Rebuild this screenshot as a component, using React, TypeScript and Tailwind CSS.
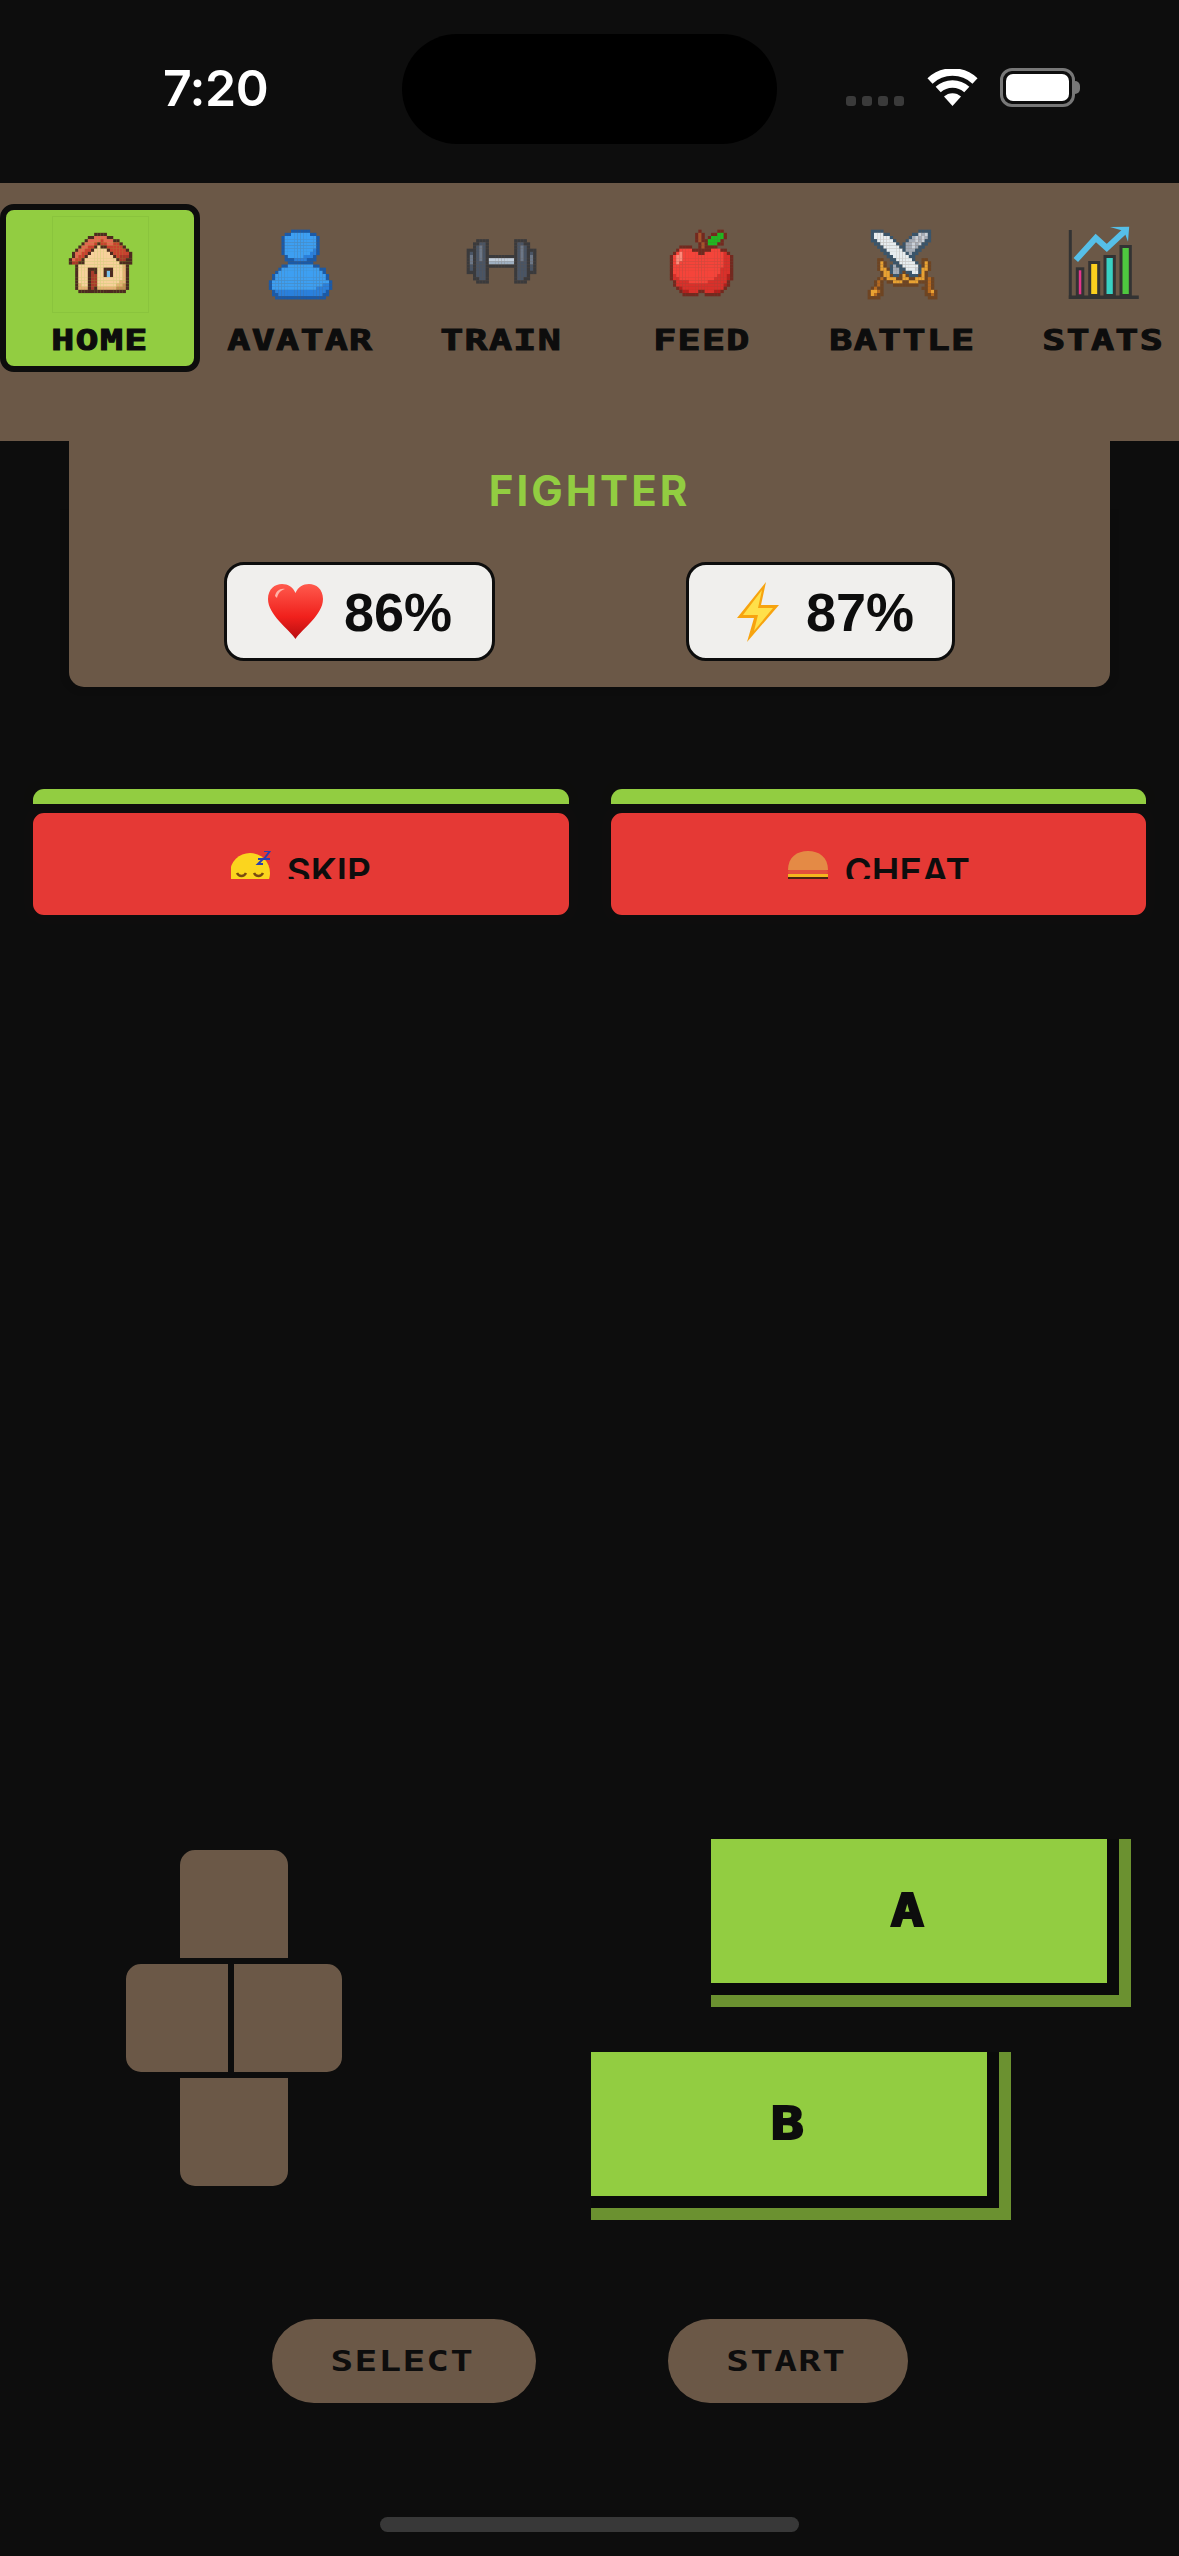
const pixelFont = "font-['DejaVu_Sans_Mono',monospace] font-bold";

type PixelMap = { rows: string[]; x: number; y: number; colors: Record<string, string> };

const house: PixelMap = {
  x: 5,
  y: 5,
  colors: { K: '#4d2a20', r: '#e2674f', R: '#c9412f', d: '#a93529', C: '#f8d09b', c: '#e5b176', t: '#c48d54', D: '#a93a2b', W: '#7cc2ea' },
  rows: [
    '........KKKK........',
    '......KKrrrrKK......',
    '.....KrrrrRrrrKK....',
    '....KrrrRKRRrrRRK...',
    '...KrrRRKCKKRRRRRK..',
    '..KrrRRKCCCCKRRRRRK.',
    '.KrrRRKCCCCCCKRRRRRK',
    '.KrRRKCCCCCCCCKRdddK',
    'KrRRKCCCCCCCCCCKddKK',
    'KddKKCCCCCCCCCCCKKKK',
    '..KCCCCCCCCCCCCCCcK.',
    '..KCCCKKKCCKKKCCCcK.',
    '..KCCCKDKCCKWKCCCcK.',
    '..KCCCKDDCCKWKCCCcK.',
    '..KCCCKDDCCCCCCCCcK.',
    '..KCCCKDDCCCCCCCccK.',
    '..KcCCKDDCCCCCCcctK.',
    '..KcccKDKcccccctttK.',
    '...KKKKKKKKKKKKKKK..',
  ],
};

const person: PixelMap = {
  x: 5,
  y: 4,
  colors: { D: '#1a5aa8', B: '#3d9ff2', m: '#2a80dc' },
  rows: [
    '.......DDDDDD.......',
    '.....DDBBBBBBDD.....',
    '....DBBBBBBBBBBD....',
    '....DBBBBBBBBBBD....',
    '....DBBBBBBBBBBD....',
    '....DBBBBBBBBBBD....',
    '....DBBBBBBBBBmD....',
    '....DBBBBBBBBmmD....',
    '.....DBBBBBmmmD.....',
    '.....DDDmmmmDDD.....',
    '......DDDDDDDD......',
    '....DDBBBBBBBBDD....',
    '...DBBBBBBBBBBBBDD..',
    '..DBBBBBBBBBBBBBBD..',
    '.DBBBBBBBBBBBBBBBBD.',
    '.DBBBBBBBBBBBBBBBBD.',
    'DBBBBBBBBBBBBBBBBBBD',
    'DBBBBBBBBBBBBBBBBmmD',
    'DBBBBBBBBBBBBBBmmmmD',
    '.DmmmmmmmmmmmmmmmmD.',
    '.DDmmmmmmmmmmmmmmDD.',
    '..DDDDDDDDDDDDDDDD..',
  ],
};

const dumbbell: PixelMap = {
  x: 4,
  y: 7,
  colors: { K: '#3a3a3c', G: '#495464', g: '#6c7787', S: '#c3d0de', s: '#9fb0c2' },
  rows: [
    '...KKKK........KKKK...',
    '..KKGGK........KGGKK..',
    '..KGgGK........KGgGK..',
    'KKKGgGK........KGgGKKK',
    'KGKGgGK........KGgGKGK',
    'KgKGgGKKKKKKKKKKGgGKgK',
    'KgKGgGKSSSSSSSSKGgGKgK',
    'KgKGGGKssssssssKGGGKgK',
    'KGKGGGKKKKKKKKKKGGGKGK',
    'KGKGGGK........KGGGKGK',
    'KKKGGGK........KGGGKKK',
    '..KGGGK........KGGGK..',
    '..KKGGK........KGGKK..',
    '...KKKK........KKKK...',
  ],
};

const apple: PixelMap = {
  x: 5,
  y: 4,
  colors: { K: '#73291f', S: '#a8522a', G: '#1fb820', R: '#f5443a', H: '#ff8a7a', d: '#d9302a', D: '#b31f1c' },
  rows: [
    '.........K.....KK...',
    '........KSK..KKGGK..',
    '........KSK.KGGGGK..',
    '........KSKKGGGGK...',
    '.........KSKGGGKK...',
    '...KKKK..KSKKKK.....',
    '..KRRRRKKKKKKRRRKK..',
    '.KRHRRRRRKKRRRRRRdK.',
    'KRHHRRRRRRRRRRRRRddK',
    'KRHHRRRRRRRRRRRRRddK',
    'KRHRRRRRRRRRRRRRRddK',
    'KRRRRRRRRRRRRRRRRddK',
    'KRRRRRRRRRRRRRRRdddK',
    'KRRRRRRRRRRRRRRRdddK',
    'KdRRRRRRRRRRRRRdddDK',
    'KddRRRRRRRRRRRddddDK',
    '.KddddRRRRRRddddddK.',
    '.KdddddddddddddddDK.',
    '..KDdddddddddddddK..',
    '...KDDdddKKdddDDK...',
    '....KKKKK..KKKKK....',
  ],
};

const swords: PixelMap = {
  x: 4,
  y: 4,
  colors: { B: '#3a556b', W: '#e6ecef', g: '#a3abb6', s: '#c9d0d8', N: '#6e4422', Y: '#e9a232', o: '#b5691f' },
  rows: [
    '.BBBB...........BBBB..',
    '.BWWWBB.......BBsgsB..',
    '.BWWWWWB.....BgsgsgB..',
    '.BBWWWWWB...BggsgsBB..',
    '..BBWWWWWB.BggsgsBB...',
    '...BBWWWWWBBggsgBB....',
    '....BBWWWWWBgggBB.....',
    '.....BBWWWWWBgBB......',
    '......BBWWWWWBB.......',
    '...NN..BBWWWWWB..NN...',
    '...NYN..BBWWWWWB.NYN..',
    '...NYN.BgBBWWWWWBNYN..',
    '...NYYNBggBBWWWsBYYN..',
    '....NYYBggBNBBWWBYN...',
    '....NYYNBBNYNBBBNYN...',
    '...NoNYYYNNYYNNYYYNoN.',
    '..NoN.NNYYYNNYYYNNNoN.',
    '..NoN...NNNNNNNN..NoN.',
    '.NoNN............NNoN.',
    'NYYoN.............NoYN',
    'NYoNN.............NNoN',
    'NNNN...............NNN',
  ],
};

function PixelIcon({ map }: { map: PixelMap }) {
  return (
    <svg viewBox="0 0 30 30" className="w-[95px] h-[95px]">
      {map.rows.flatMap((row, y) =>
        row.split('').map((ch, x) =>
          ch === '.' ? null : (
            <rect key={`${x}-${y}`} x={map.x + x} y={map.y + y} width={1.03} height={1.03} fill={map.colors[ch]} />
          ),
        ),
      )}
    </svg>
  );
}

function ChartIcon() {
  return (
    <svg viewBox="0 0 95 95" className="w-[95px] h-[95px]">
      <rect x="13.8" y="13" width="3" height="69" fill="#333" />
      <rect x="13.8" y="78.5" width="70" height="3.5" fill="#333" />
      <rect x="22.3" y="51.8" width="5.5" height="27" fill="#e5348c" stroke="#333" strokeWidth="3" />
      <rect x="34.7" y="45.5" width="9" height="33" fill="#fbcf1e" stroke="#333" strokeWidth="3" />
      <rect x="50" y="39.5" width="9.3" height="39" fill="#38d1c4" stroke="#333" strokeWidth="3" />
      <rect x="66" y="29.5" width="9.3" height="49" fill="#4ec83f" stroke="#333" strokeWidth="3" />
      <polyline points="20.8,43 40.8,21 51.8,31 71,13" fill="none" stroke="#56bfe8" strokeWidth="6" />
      <polygon points="55,10 74.2,9.7 73,24.7 69,14" fill="#56bfe8" />
    </svg>
  );
}

const tabs = [
  { label: 'HOME', icon: <PixelIcon map={house} />, active: true },
  { label: 'AVATAR', icon: <PixelIcon map={person} /> },
  { label: 'TRAIN', icon: <PixelIcon map={dumbbell} /> },
  { label: 'FEED', icon: <PixelIcon map={apple} /> },
  { label: 'BATTLE', icon: <PixelIcon map={swords} /> },
  { label: 'STATS', icon: <ChartIcon /> },
];

function Heart() {
  return (
    <svg viewBox="0 0 57 60" className="w-[57px] h-[60px] shrink-0">
      <defs>
        <linearGradient id="heartFill" x1="0" y1="0" x2="0" y2="1">
          <stop offset="0" stopColor="#ff5a4d" />
          <stop offset="0.6" stopColor="#f0201c" />
          <stop offset="1" stopColor="#b80d10" />
        </linearGradient>
      </defs>
      <path
        d="M28.5 57C22 47 1 33 1 17 1 7 8 2 15 2c6 0 11 3 13.5 9C31 5 36 2 42 2c7 0 14 5 14 15 0 16-21 30-27.500 40z"
        fill="url(#heartFill)"
      />
      <path d="M8 14c1-5 5-8 10-7-4 1-7 4-8 9z" fill="#ffb3a8" />
    </svg>
  );
}

function Bolt() {
  return (
    <svg viewBox="0 0 57 60" className="w-[57px] h-[60px] shrink-0">
      <path d="M37 0 8 36h17l-7 24 32-37H32z" fill="#f7a30f" />
      <path d="M33 8 14 33h15l-4 16 19-23H29z" fill="#ffe04a" />
    </svg>
  );
}

function SleepFace() {
  return (
    <svg viewBox="0 0 40 44" className="w-[40px] h-[44px] shrink-0">
      <circle cx="19" cy="22" r="20" fill="#fbd51e" />
      <path d="M6 22c2 4 7 4 9 0M23 22c2 4 7 4 9 0" fill="none" stroke="#7a4a10" strokeWidth="2.500" />
      <path d="M27 8h5l-5 5h5M33 0h6l-6 8h6" fill="none" stroke="#2a3fb0" strokeWidth="2" />
    </svg>
  );
}

function Burger() {
  return (
    <svg viewBox="0 0 42 44" className="w-[42px] h-[44px] shrink-0">
      <path d="M1 19C1 6 10 0 21 0s20 6 20 19z" fill="#e48a45" />
      <rect x="1" y="19" width="40" height="4" rx="2" fill="#e2503c" />
      <rect x="1" y="23" width="40" height="3" fill="#f4b61e" />
      <rect x="1" y="26" width="40" height="7" fill="#4a2412" />
    </svg>
  );
}

function ActionButton({ label, emoji }: { label: string; emoji: React.ReactNode }) {
  return (
    <div className="flex flex-col">
      <div className="h-[24px] border-[9px] border-b-0 border-[#0d0d0dfe] bg-[#92cd41] rounded-t-[20px]" />
      <div className="h-[120px] border-[9px] border-[#0d0d0dfe] bg-[#e53935] rounded-[20px]">
        <div className="h-[66px] overflow-hidden flex justify-center items-start gap-4 pt-[38px]">
          {emoji}
          <span className="mt-[2px] text-[37px] leading-none font-semibold text-[#0d0d0d]">{label}</span>
        </div>
      </div>
    </div>
  );
}

function BigButton({ label, className }: { label: string; className: string }) {
  return (
    <div className={`w-[420px] h-[168px] border-r-[12px] border-b-[12px] border-[#6b9130] ${className}`}>
      <div className="h-full border-r-[12px] border-b-[12px] border-[#0a0a0a] bg-[#92cd41] flex items-center justify-center pr-[4px]">
        <span className={`${pixelFont} text-[44px] leading-none scale-x-[1.25] [-webkit-text-stroke:2px_#0d0d0d] text-[#0d0d0d]`}>{label}</span>
      </div>
    </div>
  );
}

function PillButton({ label, className }: { label: string; className: string }) {
  return (
    <div className={`h-[96px] border-[6px] border-[#0d0d0dfe] bg-[#6b5847] rounded-full flex items-center justify-center pr-[2px] ${className}`}>
      <span className={`${pixelFont} text-[29px] leading-none tracking-[1px] scale-x-[1.3] text-[#0d0d0d]`}>{label}</span>
    </div>
  );
}

export default function App() {
  return (
    <div className="w-[1179px] h-[2556px] overflow-hidden bg-[#0d0d0d] font-['Inter',sans-serif]">
      {/* status bar */}
      <div className="h-[183px] flex items-start">
        <span className="w-[239px] ml-[163px] mt-[63px] text-[50px] leading-none font-semibold tracking-[-0.5px] text-white">7:20</span>
        <div className="w-[375px] h-[110px] mt-[34px] bg-black rounded-full" />
        <div className="ml-[69px] mt-[96px] flex gap-[6px]">
          <span className="w-[10px] h-[10px] rounded-[3px] bg-[#3a3a3a]" />
          <span className="w-[10px] h-[10px] rounded-[3px] bg-[#3a3a3a]" />
          <span className="w-[10px] h-[10px] rounded-[3px] bg-[#3a3a3a]" />
          <span className="w-[10px] h-[10px] rounded-[3px] bg-[#3a3a3a]" />
        </div>
        <svg viewBox="0 0 51 37" className="w-[51px] h-[37px] ml-[23px] mt-[69px]">
          <path d="M3 11.900A33 33 0 0 1 48 11.900" fill="none" stroke="#fff" strokeWidth="7.500" />
          <path d="M11.200 20.600A21 21 0 0 1 39.800 20.600" fill="none" stroke="#fff" strokeWidth="7.500" />
          <path d="M25.500 37 17 27.500A12.500 12.500 0 0 1 34 27.500Z" fill="#fff" />
        </svg>
        <div className="ml-[22px] mt-[68px] flex items-center">
          <div className="w-[75px] h-[39px] p-[3px] border-[3px] border-[#777] rounded-[12px]">
            <div className="w-full h-full bg-white rounded-[7px]" />
          </div>
          <div className="w-[5px] h-[13px] bg-[#777] rounded-r-full" />
        </div>
      </div>

      {/* tabs */}
      <div className="h-[258px] bg-[#6b5847] flex items-start gap-[0.6px] pt-[21px] overflow-hidden">
        {tabs.map((tab) => (
          <div
            key={tab.label}
            className={`w-[200px] h-[168px] shrink-0 flex flex-col items-center pt-[7px] border-[6px] rounded-[14px] ${
              tab.active ? 'bg-[#92cd41] border-[#0d0d0d]' : 'border-transparent'
            }`}
          >
            <div className={`w-[95px] h-[95px] shrink-0 ${tab.active ? 'outline outline-[#8ac43d]' : ''}`}>{tab.icon}</div>
            <span className={`mt-[13px] ${pixelFont} text-[29px] leading-[30px] tracking-[1px] scale-x-[1.32] [-webkit-text-stroke:1px_#0d0d0d] text-[#0d0d0d]`}>
              {tab.label}
            </span>
          </div>
        ))}
      </div>

      {/* fighter card */}
      <div className="mx-[60px] border-[9px] border-t-0 border-[#0d0d0dfe] bg-[#6b5847] rounded-b-[24px] pt-[29px] pb-[26px] flex flex-col items-center">
        <div className="text-[42px] leading-none font-bold tracking-[3px] text-[#92cd41]">FIGHTER</div>
        <div className="mt-[50px] flex justify-center gap-[191px]">
          <div className="h-[99px] pl-[40px] pr-[40px] flex items-center gap-5 border-[3px] border-[#0d0d0d] bg-[#f0efed] rounded-[20px]">
            <Heart />
            <span className="text-[54px] leading-none font-bold font-['Liberation_Sans',sans-serif] text-[#0d0d0d]">86%</span>
          </div>
          <div className="h-[99px] pl-[40px] pr-[38px] flex items-center gap-5 border-[3px] border-[#0d0d0d] bg-[#f0efed] rounded-[20px]">
            <Bolt />
            <span className="text-[54px] leading-none font-bold font-['Liberation_Sans',sans-serif] text-[#0d0d0d]">87%</span>
          </div>
        </div>
      </div>

      {/* actions */}
      <div className="mt-[84px] px-[24px] grid grid-cols-2 gap-[24px]">
        <ActionButton label="SKIP" emoji={<SleepFace />} />
        <ActionButton label="CHEAT" emoji={<Burger />} />
      </div>

      {/* d-pad and A / B */}
      <div className="mt-[915px] flex items-start">
        <div className="ml-[120px] mt-[5px] grid grid-cols-[54px_54px_6px_60px_54px] grid-rows-[114px_6px_108px_6px_114px]">
          <div className="col-start-2 col-end-5 row-start-1 row-end-3 border-[6px] border-[#0d0d0dfe] bg-[#6b5847] rounded-t-[21px]" />
          <div className="col-start-1 col-end-4 row-start-2 row-end-5 border-[6px] border-[#0d0d0dfe] bg-[#6b5847] rounded-l-[21px]" />
          <div className="col-start-3 col-end-6 row-start-2 row-end-5 border-[6px] border-[#0d0d0dfe] bg-[#6b5847] rounded-r-[21px]" />
          <div className="col-start-2 col-end-5 row-start-4 row-end-6 border-[6px] border-[#0d0d0dfe] bg-[#6b5847] rounded-b-[21px]" />
        </div>
        <div className="flex flex-col gap-[45px]">
          <BigButton label="A" className="ml-[363px]" />
          <BigButton label="B" className="ml-[243px]" />
        </div>
      </div>

      {/* select / start */}
      <div className="mt-[93px] flex justify-center gap-[120px]">
        <PillButton label="SELECT" className="w-[276px]" />
        <PillButton label="START" className="w-[252px]" />
      </div>

      <div className="mt-[108px] mx-auto w-[419px] h-[15px] rounded-lg bg-[#383838]" />
    </div>
  );
}
